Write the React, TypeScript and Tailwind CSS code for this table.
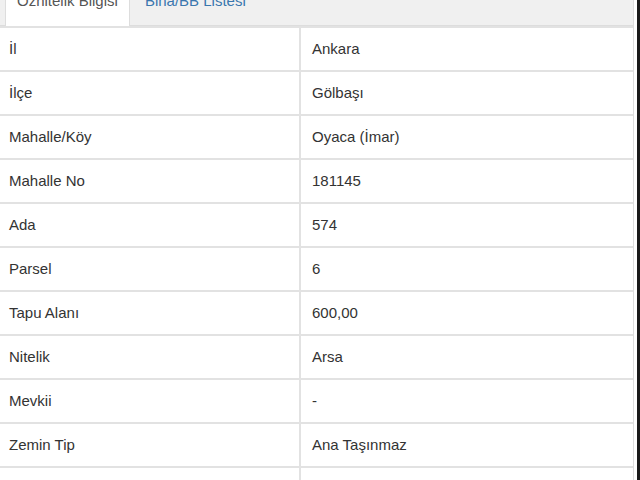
import React from 'react';

const rows: [string, string][] = [
    ['İl', 'Ankara'],
    ['İlçe', 'Gölbaşı'],
    ['Mahalle/Köy', 'Oyaca (İmar)'],
    ['Mahalle No', '181145'],
    ['Ada', '574'],
    ['Parsel', '6'],
    ['Tapu Alanı', '600,00'],
    ['Nitelik', 'Arsa'],
    ['Mevkii', '-'],
    ['Zemin Tip', 'Ana Taşınmaz'],
    ['Pafta', ''],
];

export default function App() {
    return (
        <div className="h-[480px] overflow-hidden bg-white border-r-[3px] border-[#1a1a1a] text-[15px] text-[#333] font-['Liberation_Sans',Arial,sans-serif]">
            <div className="w-[634px] border-r border-[#ddd]">
                {/* Tabs */}
                <div className="flex items-end -mt-[20px] h-[46px] pl-[5px] bg-[#f0f0f0] border-b border-[#ddd]">
                    <div className="-mb-px h-[46px] px-[11px] pt-[10px] bg-white border border-b-0 border-[#ddd] text-[#555] leading-[20px]">
                        Öznitelik Bilgisi
                    </div>
                    <div className="-mb-px ml-[2px] h-[46px] px-[12px] pt-[10px] border border-transparent text-[#3a77ae] leading-[20px]">
                        Bina/BB Listesi
                    </div>
                </div>

                {/* Attribute table */}
                <table className="w-full border-collapse">
                    <tbody>
                        {rows.map(([label, value], i) => (
                            <tr key={i} className="h-[44px] border-t-2 border-[#e2e2e2]">
                                <td className="w-[300px] pl-[9px] border-r-2 border-[#e2e2e2] leading-[20px]">{label}</td>
                                <td className="pl-[11px] leading-[20px]">{value}</td>
                            </tr>
                        ))}
                    </tbody>
                </table>
            </div>
        </div>
    );
}
